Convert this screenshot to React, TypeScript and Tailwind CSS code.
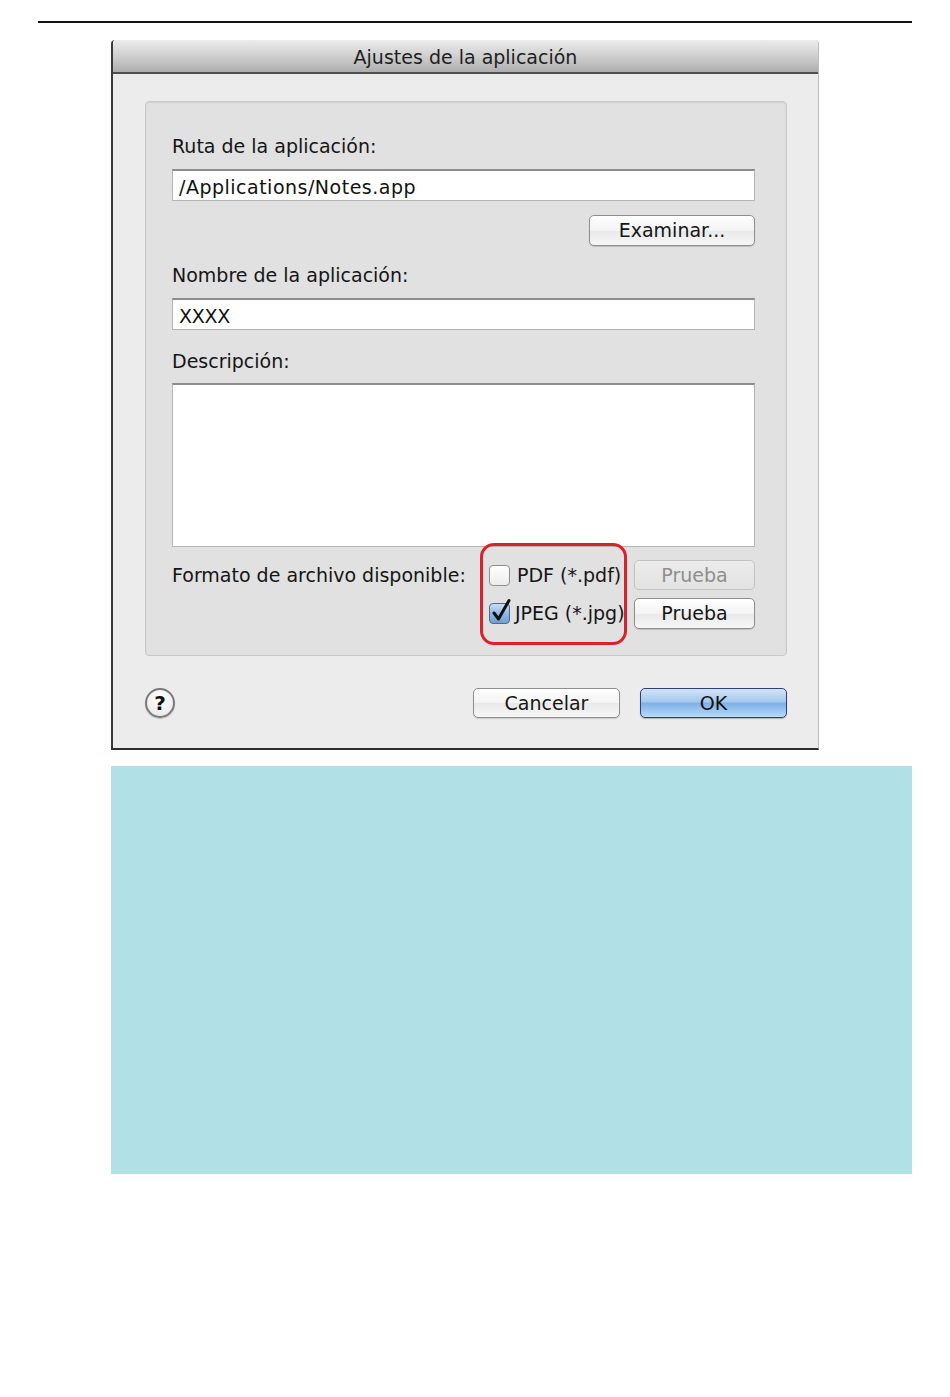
import React from "react";

const font = { fontFamily: '"DejaVu Sans", "Noto Sans", sans-serif' };

function Field({ value, wide = false }: { value?: string; wide?: boolean }) {
  return (
    <div
      className={
        "h-[32px] w-full bg-white border border-[#b4b4b4] border-t-[2px] border-t-[#8c8c8c] pl-[6px] pt-[3px] flex items-center text-[19px] text-[#111] " +
        (wide ? "tracking-[0.5px]" : "tracking-[-0.3px]")
      }
    >
      {value}
    </div>
  );
}

function MacButton({
  children,
  className = "",
  disabled = false,
}: {
  children: React.ReactNode;
  className?: string;
  disabled?: boolean;
}) {
  return (
    <div
      className={
        "h-[30px] flex items-center justify-center rounded-[5px] text-[19px] " +
        (disabled
          ? "border border-[#c2c2c2] bg-[linear-gradient(to_bottom,#ececec,#e2e2e2)] text-[#8e8e8e] "
          : "border border-[#8e8e8e] bg-[linear-gradient(to_bottom,#ffffff,#f3f3f3_50%,#e9e9e9_51%,#f6f6f6)] text-[#161616] shadow-[0_1px_1px_rgba(0,0,0,0.15)] ") +
        className
      }
    >
      {children}
    </div>
  );
}

function CheckBox({ checked }: { checked?: boolean }) {
  return (
    <div className="relative w-[21px] h-[21px]">
      <div
        className={
          "w-[21px] h-[21px] rounded-[4px] border " +
          (checked
            ? "border-[#4d6a90] bg-[linear-gradient(to_bottom,#c9ddf3,#8fb6e2_55%,#6e9fd6)]"
            : "border-[#8f8f8f] bg-[linear-gradient(to_bottom,#ffffff,#ececec)]")
        }
      />
      {checked && (
        <svg
          className="absolute left-0 top-[-5px]"
          width="24"
          height="26"
          viewBox="0 0 24 26"
        >
          <path
            d="M5 15 L9.5 21 L20 2.5"
            fill="none"
            stroke="#111"
            strokeWidth="3"
            strokeLinecap="round"
            strokeLinejoin="round"
          />
        </svg>
      )}
    </div>
  );
}

export default function App() {
  return (
    <div className="w-[950px] h-[1397px] bg-white relative" style={font}>
      <div className="pt-[21px]">
        <div className="ml-[38px] w-[874px] h-[2px] bg-[#111]" />
      </div>

      {/* Dialog */}
      <div className="ml-[111px] mt-[17px] w-[708px] h-[710px] flex flex-col bg-[#ececec] border-l-[2px] border-l-[#3a3a3a] border-b-[2px] border-b-[#2e2e2e] border-r border-r-[#bdbdbd] rounded-tl-[4px] rounded-tr-[4px] overflow-hidden">
        {/* Title bar */}
        <div className="h-[34px] shrink-0 flex items-center justify-center bg-[linear-gradient(to_bottom,#ececec,#d2d2d2_45%,#aeaeae)] border-b-[2px] border-b-[#4e4e4e] text-[19px] text-[#1e1e1e] pt-[3px]">
          Ajustes de la aplicación
        </div>

        {/* Body */}
        <div className="flex-1 flex flex-col pl-[32px] pr-[31px]">
          {/* Inner panel */}
          <div className="mt-[27px] h-[555px] bg-[#e1e1e1] border border-[#c9c9c9] rounded-[4px] shadow-[inset_0_1px_2px_rgba(0,0,0,0.08)] pl-[26px] pr-[31px] flex flex-col text-[19px] text-[#151515]">
            <div className="mt-[33px] h-[22px] leading-[22px]">Ruta de la aplicación:</div>
            <div className="mt-[12px]">
              <Field value="/Applications/Notes.app" wide />
            </div>
            <div className="mt-[14px] flex justify-end">
              <MacButton className="w-[166px] h-[31px]">Examinar...</MacButton>
            </div>
            <div className="mt-[18px] h-[22px] leading-[22px]">Nombre de la aplicación:</div>
            <div className="mt-[12px]">
              <Field value="XXXX" />
            </div>
            <div className="mt-[20px] h-[22px] leading-[22px]">Descripción:</div>
            <div className="mt-[11px] h-[164px] bg-white border border-[#b4b4b4] border-t-[2px] border-t-[#8c8c8c]" />

            {/* Format row */}
            <div className="mt-[13px] flex items-start">
              <div className="w-[317px] h-[30px] leading-[30px] whitespace-nowrap">
                Formato de archivo disponible:
              </div>
              <div className="relative flex flex-col gap-[8px]">
                <div className="absolute left-[-9px] top-[-17px] w-[147px] h-[102px] border-[3px] border-[#d8232c] rounded-[14px] pointer-events-none" />
                <div className="h-[30px] flex items-center gap-[7px]">
                  <CheckBox />
                  <span className="whitespace-nowrap">PDF (*.pdf)</span>
                </div>
                <div className="h-[30px] flex items-center gap-[5px]">
                  <CheckBox checked />
                  <span className="whitespace-nowrap">JPEG (*.jpg)</span>
                </div>
              </div>
              <div className="ml-auto w-[121px] flex flex-col gap-[8px]">
                <MacButton disabled>Prueba</MacButton>
                <MacButton className="h-[31px]">Prueba</MacButton>
              </div>
            </div>
          </div>

          {/* Bottom buttons */}
          <div className="mt-[32px] flex items-center">
            <div className="w-[30px] h-[30px] rounded-full border-[2px] border-[#7a7a7a] bg-[radial-gradient(circle_at_50%_35%,#ffffff,#e6e6e6)] flex items-center justify-center text-[20px] font-bold text-[#111] shadow-[0_1px_1px_rgba(0,0,0,0.2)]">
              ?
            </div>
            <div className="ml-auto flex gap-[20px]">
              <MacButton className="w-[147px]">Cancelar</MacButton>
              <div className="w-[147px] h-[30px] flex items-center justify-center rounded-[5px] border border-[#2f3c86] bg-[linear-gradient(to_bottom,#d3e5f8,#a5c8ee_45%,#7fb0e6_52%,#b7dbf8)] text-[19px] text-[#111] shadow-[0_1px_1px_rgba(0,0,0,0.25)]">
                OK
              </div>
            </div>
          </div>
        </div>
      </div>

      {/* Cyan box */}
      <div className="ml-[111px] mt-[16px] w-[801px] h-[408px] bg-[#b1e0e6]" />
    </div>
  );
}
